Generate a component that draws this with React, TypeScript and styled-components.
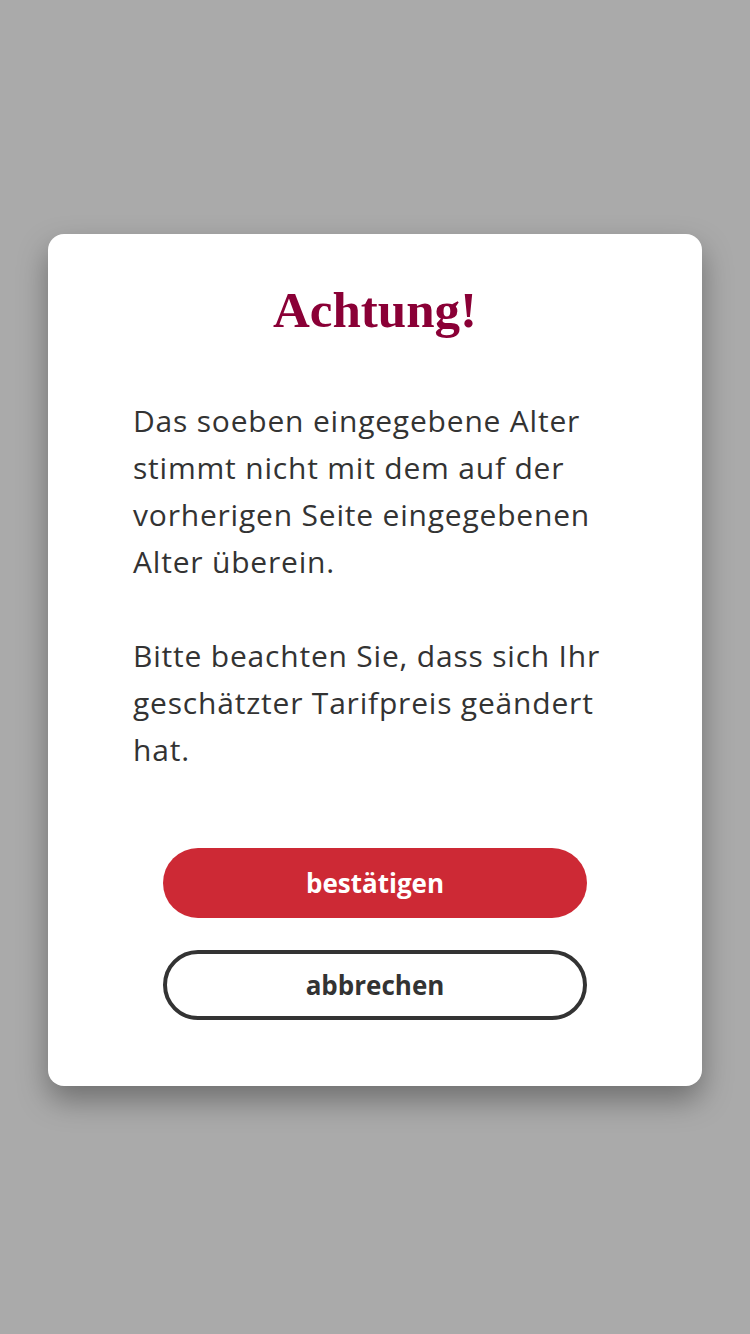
import React from "react";
import styled, { createGlobalStyle } from "styled-components";

const Global = createGlobalStyle`
  html, body { margin: 0; padding: 0; background: #aaaaaa; }
  body { font-family: "Open Sans", "Noto Sans", sans-serif; }
`;

const Screen = styled.div`
  width: 750px;
  height: 1334px;
  background: #aaaaaa;
  display: flex;
  justify-content: center;
  padding-top: 234px;
  box-sizing: border-box;
`;

const Card = styled.div`
  width: 654px;
  height: 852px;
  box-sizing: border-box;
  background: #ffffff;
  border-radius: 16px;
  box-shadow: 0 14px 30px rgba(0, 0, 0, 0.35);
  padding: 46px 85px 0 85px;
  display: flex;
  flex-direction: column;
`;

const Title = styled.h1`
  margin: 0;
  text-align: center;
  font-family: "Liberation Serif", "DejaVu Serif", serif;
  font-weight: 700;
  font-size: 51px;
  line-height: 60px;
  color: #8a0036;
`;

const Body = styled.div`
  margin-top: 57px;
  color: #333333;
  font-family: "Open Sans", "Noto Sans", sans-serif;
  font-size: 30px;
  letter-spacing: 0.8px;
  line-height: 47px;
`;

const Para = styled.p`
  margin: 0 0 47px 0;
  &:last-child { margin-bottom: 0; }
`;

const Actions = styled.div`
  margin-top: 75px;
  display: flex;
  flex-direction: column;
  align-items: center;
  gap: 32px;
`;

const Button = styled.button<{ $primary?: boolean }>`
  width: 424px;
  height: 70px;
  box-sizing: border-box;
  border-radius: 35px;
  border: ${(p) => (p.$primary ? "none" : "4px solid #333333")};
  background: ${(p) => (p.$primary ? "#cd2935" : "#ffffff")};
  color: ${(p) => (p.$primary ? "#ffffff" : "#333333")};
  font-family: "Open Sans", "Noto Sans", sans-serif;
  font-weight: 700;
  font-size: 26px;
  padding: 0;
  cursor: pointer;
`;

export default function App() {
  return (
    <>
      <Global />
      <Screen>
        <Card>
          <Title>Achtung!</Title>
          <Body>
            <Para>
              Das soeben eingegebene Alter stimmt nicht mit dem auf der vorherigen Seite eingegebenen Alter
              überein.
            </Para>
            <Para>Bitte beachten Sie, dass sich Ihr geschätzter Tarifpreis geändert hat.</Para>
          </Body>
          <Actions>
            <Button $primary>bestätigen</Button>
            <Button>abbrechen</Button>
          </Actions>
        </Card>
      </Screen>
    </>
  );
}
